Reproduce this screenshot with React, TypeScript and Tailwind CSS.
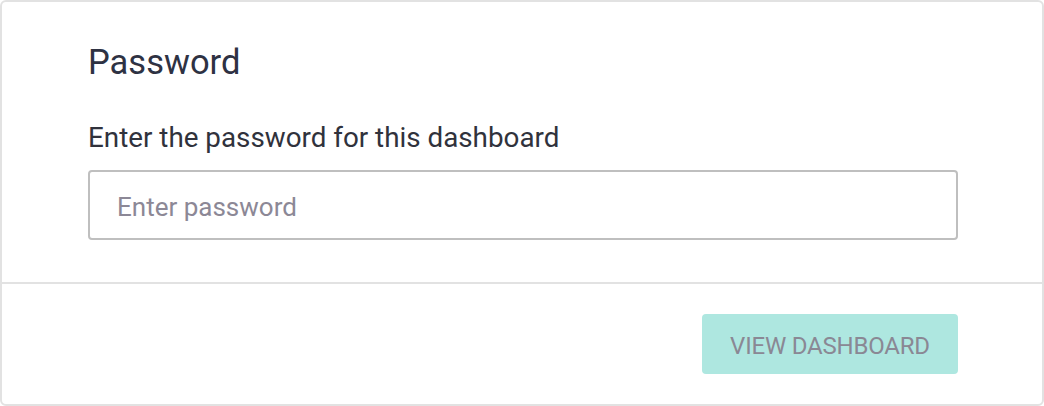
import React from "react";

export default function App() {
  return (
    <div
      className="w-[1044px] h-[406px] bg-white"
      style={{ fontFamily: "Roboto, 'Noto Sans', sans-serif" }}
    >
      <div className="w-full h-full border-2 border-[#e2e2e2] rounded-[6px] flex flex-col">
        <div className="h-[282px] border-b-2 border-[#e2e2e2] pl-[86px] pr-[84px] pt-[38px]">
          <h1 className="text-[34.5px] leading-[44px] text-[#2e3243] font-normal">Password</h1>
          <p className="mt-[38px] text-[27.8px] leading-[32px] text-[#30323c]">
            Enter the password for this dashboard
          </p>
          <input
            type="password"
            placeholder="Enter password"
            className="mt-[16px] w-full h-[70px] border-2 border-[#bfbfbf] rounded-[4px] px-[27px] pt-[4px] text-[26px] text-[#33333d] placeholder:text-[#8c8896] outline-none"
          />
        </div>
        <div className="flex-1 flex items-center justify-end pr-[84px]">
          <button className="w-[256px] h-[60px] rounded-[4px] bg-[#aee7e0] pt-[3px] text-[#8a8894] text-[24px] uppercase tracking-[-0.2px]">
            View Dashboard
          </button>
        </div>
      </div>
    </div>
  );
}
